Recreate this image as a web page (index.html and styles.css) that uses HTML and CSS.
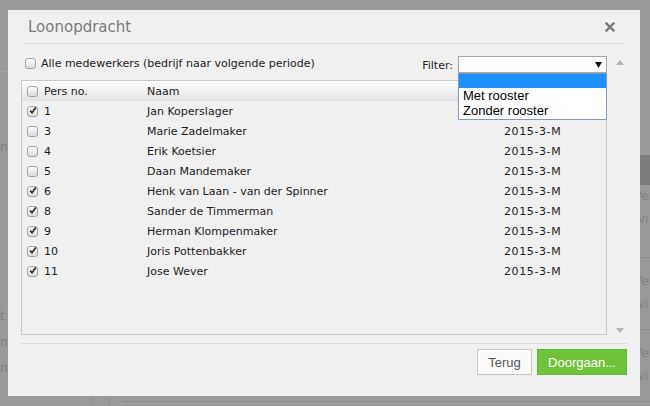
FILE: index.html
```html
<!DOCTYPE html>
<html lang="nl">
<head>
<meta charset="utf-8">
<title>Loonopdracht</title>
<link rel="stylesheet" href="styles.css">
</head>
<body>
<div class="backdrop">
  <aside class="side">
    <div class="side-head"></div>
    <div class="side-item first">np</div>
    <div class="side-spacer"></div>
    <div class="side-item">t</div>
    <div class="side-item">n</div>
    <div class="side-item">nt</div>
  </aside>
  <div class="rail"><div class="rail-line"></div></div>
  <main class="main">
    <div class="main-body">
      <div class="main-left"></div>
      <div class="panel">
        <div class="panel-top"></div>
        <div class="panel-bar"></div>
        <div class="panel-row r1"><span>Ver</span><span class="ind">vi</span></div>
        <div class="panel-row"><span>Ver</span><span class="ind">vi</span></div>
        <div class="panel-row"><span>Ver</span><span class="ind">vi</span></div>
      </div>
    </div>
    <div class="main-foot"></div>
  </main>
</div>

<section class="dialog">
  <header class="dlg-head">
    <h1 class="dlg-title">Loonopdracht</h1>
    <svg class="close" width="10" height="10" viewBox="0 0 10 10"><path d="M1.5 1.5 L8.5 8.5 M8.5 1.5 L1.5 8.5" stroke="#7a7a7a" stroke-width="2.4" stroke-linecap="square"/></svg>
  </header>
  <div class="dlg-body">
    <div class="scroll">
      <div class="scroll-main">
        <div class="toolbar">
          <label class="all"><span class="cb"></span>Alle medewerkers (bedrijf naar volgende periode)</label>
          <div class="filter">
            <span class="filter-label">Filter:</span>
            <div class="select">
              <svg class="sel-arrow" width="7" height="6" viewBox="0 0 7 6"><path d="M0 0 H7 L3.5 6 Z" fill="#111"/></svg>
              <div class="options">
                <div class="opt hl"></div>
                <div class="opt">Met rooster</div>
                <div class="opt">Zonder rooster</div>
              </div>
            </div>
          </div>
        </div>
        <div class="grid">
          <div class="row head">
            <div class="c1"><span class="cb"></span>Pers no.</div>
            <div>Naam</div>
            <div></div>
          </div>
          <div class="row"><div class="c1"><span class="cb on"><svg width="9" height="9" viewBox="0 0 9 9"><path d="M1.2 4.6 L3.4 7 L7.8 1" fill="none" stroke="#333" stroke-width="2"/></svg></span>1</div><div>Jan Koperslager</div><div></div></div>
          <div class="row"><div class="c1"><span class="cb"></span>3</div><div>Marie Zadelmaker</div><div class="date">2015-3-M</div></div>
          <div class="row"><div class="c1"><span class="cb"></span>4</div><div>Erik Koetsier</div><div class="date">2015-3-M</div></div>
          <div class="row"><div class="c1"><span class="cb"></span>5</div><div>Daan Mandemaker</div><div class="date">2015-3-M</div></div>
          <div class="row"><div class="c1"><span class="cb on"><svg width="9" height="9" viewBox="0 0 9 9"><path d="M1.2 4.6 L3.4 7 L7.8 1" fill="none" stroke="#333" stroke-width="2"/></svg></span>6</div><div>Henk van Laan - van der Spinner</div><div class="date">2015-3-M</div></div>
          <div class="row"><div class="c1"><span class="cb on"><svg width="9" height="9" viewBox="0 0 9 9"><path d="M1.2 4.6 L3.4 7 L7.8 1" fill="none" stroke="#333" stroke-width="2"/></svg></span>8</div><div>Sander de Timmerman</div><div class="date">2015-3-M</div></div>
          <div class="row"><div class="c1"><span class="cb on"><svg width="9" height="9" viewBox="0 0 9 9"><path d="M1.2 4.6 L3.4 7 L7.8 1" fill="none" stroke="#333" stroke-width="2"/></svg></span>9</div><div>Herman Klompenmaker</div><div class="date">2015-3-M</div></div>
          <div class="row"><div class="c1"><span class="cb on"><svg width="9" height="9" viewBox="0 0 9 9"><path d="M1.2 4.6 L3.4 7 L7.8 1" fill="none" stroke="#333" stroke-width="2"/></svg></span>10</div><div>Joris Pottenbakker</div><div class="date">2015-3-M</div></div>
          <div class="row"><div class="c1"><span class="cb on"><svg width="9" height="9" viewBox="0 0 9 9"><path d="M1.2 4.6 L3.4 7 L7.8 1" fill="none" stroke="#333" stroke-width="2"/></svg></span>11</div><div>Jose Wever</div><div class="date">2015-3-M</div></div>
        </div>
      </div>
      <div class="scrollbar">
        <svg width="8" height="5" viewBox="0 0 8 5"><path d="M0 5 L4 0 L8 5 Z" fill="#b5b5b5"/></svg>
        <svg width="8" height="5" viewBox="0 0 8 5"><path d="M0 0 L4 5 L8 0 Z" fill="#b5b5b5"/></svg>
      </div>
    </div>
  </div>
  <footer class="dlg-foot">
    <button class="btn back">Terug</button>
    <button class="btn go">Doorgaan...</button>
  </footer>
</section>
</body>
</html>
```

FILE: styles.css
```css
* { box-sizing: border-box; }
html, body { margin: 0; padding: 0; }
body {
  width: 650px;
  height: 406px;
  overflow: hidden;
  position: relative;
  background: #9a9a9a;
  font-family: "DejaVu Sans", Verdana, sans-serif;
}

/* dimmed page behind the modal */
.backdrop {
  display: grid;
  grid-template-columns: 92px 18px 1fr;
  height: 406px;
  background: #9a9a9a;
  color: #7f7f7f;
  font-size: 12px;
  white-space: nowrap;
  overflow: hidden;
}
.side { display: flex; flex-direction: column; overflow: hidden; }
.side-head { height: 72px; border-bottom: 1px solid #a3a3a3; flex: none; }
.side-item { height: 26px; line-height: 26px; flex: none; }
.side-item.first { margin-top: 62px; }
.side-spacer { height: 143px; flex: none; }
.rail { display: flex; flex-direction: column; justify-content: flex-end; }
.rail-line { height: 10px; border-left: 1px solid #8d8d8d; border-right: 1px solid #8d8d8d; }
.main { display: flex; flex-direction: column; }
.main-body { flex: 1; display: flex; }
.main-left { width: 524px; flex: none; }
.panel { flex: 1; display: flex; flex-direction: column; overflow: hidden; }
.panel-top { height: 155px; }
.panel-bar { height: 30px; background: #7c7c7c; }
.panel-row {
  height: 72px;
  display: flex;
  flex-direction: column;
  padding-top: 16px;
  gap: 9px;
  line-height: 14px;
}
.panel-row + .panel-row { border-top: 1px solid #8c8c8c; }
.panel-row.r1 { padding-top: 4px; }
.panel-row .ind { padding-left: 4px; }
.main-foot { height: 5px; margin-left: 11px; border-top: 1px solid #8c8c8c; }

/* modal */
.dialog {
  position: absolute;
  left: 8px;
  top: 10px;
  width: 632px;
  height: 386px;
  background: #f0f0f0;
}
.dlg-head {
  margin: 0 17px;
  height: 34px;
  border-bottom: 1px solid #dadada;
  display: flex;
  align-items: center;
  justify-content: space-between;
  padding: 0 8px 0 3px;
}
.dlg-title {
  margin: 1px 0 0 0;
  font-size: 15px;
  font-weight: normal;
  color: #7b7b7b;
}
.close { display: block; margin-top: 1px; }

.dlg-body { padding: 11px 0 0 13px; }
.scroll { display: flex; width: 606px; height: 280px; }
.scroll-main { width: 586px; display: flex; flex-direction: column; }
.toolbar {
  height: 25px;
  flex: none;
  display: flex;
  justify-content: space-between;
  align-items: flex-start;
  padding-left: 4px;
  font-size: 11px;
  color: #222;
}
.all { display: flex; align-items: center; gap: 5px; height: 17px; }
.filter { display: flex; align-items: center; gap: 5px; margin-top: 1px; }
.filter-label { padding-top: 2px; }
.select {
  position: relative;
  width: 149px;
  height: 17px;
  background: #fff;
  border: 1px solid #a7a7a7;
  display: flex;
  align-items: center;
  justify-content: flex-end;
  padding-right: 4px;
}
.sel-arrow { display: block; }
.options {
  position: absolute;
  top: 16px;
  left: -1px;
  width: 149px;
  height: 47px;
  background: #fff;
  border: 1px solid #7f9cc0;
  font-family: "Liberation Sans", Arial, sans-serif;
  font-size: 13px;
  color: #000;
  z-index: 2;
}
.opt { height: 15px; line-height: 15px; padding-left: 4px; }
.opt.hl { height: 14px; background: #1e90ff; }

.grid {
  height: 255px;
  border: 1px solid #c9c9c9;
  background: #f0f0f0;
}
.row {
  display: grid;
  grid-template-columns: 125px 357px 1fr;
  height: 20px;
  align-items: center;
  font-size: 11px;
  line-height: 13px;
  color: #1c1c1c;
  white-space: nowrap;
  padding-top: 1px;
}
.row.head { background: linear-gradient(#ffffff, #e2e2e2); }
.c1 { display: flex; align-items: center; gap: 6px; padding-left: 5px; margin-top: -1px; }
.date { letter-spacing: 0.6px; }

.cb {
  width: 11px;
  height: 11px;
  flex: none;
  border: 1px solid #a4a4a4;
  border-radius: 3px;
  background: linear-gradient(#fdfdfd, #dcdcdc);
  display: inline-flex;
  align-items: center;
  justify-content: center;
}
.cb svg { display: block; margin-left: 1px; margin-top: -1px; }

.scrollbar {
  width: 20px;
  flex: none;
  display: flex;
  flex-direction: column;
  justify-content: space-between;
  align-items: center;
  padding: 5px 0 2px 6px;
}
.scrollbar svg { display: block; }

.dlg-foot {
  margin: 8px 0 0 13px;
  width: 606px;
  border-top: 1px solid #dadada;
  padding-top: 5px;
  display: flex;
  justify-content: flex-end;
  gap: 5px;
}
.btn {
  height: 26px;
  font-family: "Liberation Sans", Arial, sans-serif;
  font-size: 13px;
  padding: 0;
  cursor: pointer;
}
.btn.back { width: 55px; background: #fbfbfb; border: 1px solid #c6c6c6; color: #555; }
.btn.go { width: 90px; background: #6ec23c; border: 1px solid #63b534; color: #fff; }
```
